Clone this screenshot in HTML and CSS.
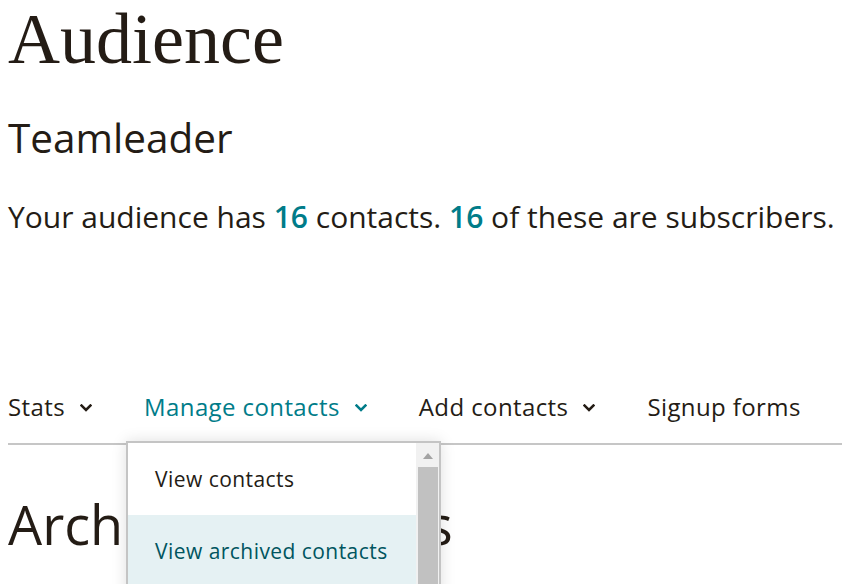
FILE: index.html
```html
<!DOCTYPE html>
<html lang="en">
<head>
<meta charset="utf-8">
<title>Audience</title>
<link rel="stylesheet" href="styles.css">
</head>
<body>
<main class="page">
  <h1 class="page-title">Audience</h1>
  <h2 class="audience-name">Teamleader</h2>
  <p class="summary">Your audience has <span class="count">16</span> contacts. <span class="count">16</span> of these are subscribers.</p>

  <nav class="tabs">
    <div class="tab">
      <span>Stats</span>
      <svg class="chev" viewBox="0 0 12 8" width="12" height="8"><path d="M1.6 1.6 L6 6 L10.4 1.6"/></svg>
    </div>
    <div class="tab tab-open">
      <span>Manage contacts</span>
      <svg class="chev" viewBox="0 0 12 8" width="12" height="8"><path d="M1.6 1.6 L6 6 L10.4 1.6"/></svg>
      <div class="menu">
        <ul class="menu-list">
          <li class="menu-item">View contacts</li>
          <li class="menu-item menu-item-active">View archived contacts</li>
        </ul>
        <div class="scrollbar">
          <div class="scroll-up"></div>
          <div class="scroll-thumb"></div>
        </div>
      </div>
    </div>
    <div class="tab">
      <span>Add contacts</span>
      <svg class="chev" viewBox="0 0 12 8" width="12" height="8"><path d="M1.6 1.6 L6 6 L10.4 1.6"/></svg>
    </div>
    <div class="tab">
      <span>Signup forms</span>
    </div>
  </nav>

  <h2 class="section-title">Archived contacts</h2>
</main>
</body>
</html>
```
FILE: styles.css
```css
html, body {
  margin: 0;
  padding: 0;
  background: #ffffff;
}

.page {
  box-sizing: border-box;
  height: 584px;
  overflow: hidden;
  padding: 3px 0 0 8px;
  color: #241c15;
  font-family: "Open Sans", "Liberation Sans", sans-serif;
}

.page-title {
  margin: 0;
  font-family: "Liberation Serif", serif;
  font-weight: 400;
  font-size: 72px;
  line-height: 72px;
  color: #241c15;
}

.audience-name {
  margin: 39px 0 0;
  font-weight: 400;
  font-size: 40.5px;
  line-height: 48px;
}

.summary {
  margin: 35px 0 0;
  font-size: 30px;
  line-height: 40px;
  white-space: nowrap;
}

.count {
  color: #007c89;
  font-weight: 600;
}

.tabs {
  margin-top: 155px;
  display: flex;
  align-items: center;
  gap: 52px;
  padding-bottom: 21px;
  border-bottom: 2px solid #c6c6c6;
}

.tab {
  position: relative;
  display: flex;
  align-items: center;
  gap: 15px;
  font-size: 24px;
  line-height: 30px;
  font-weight: 500;
  letter-spacing: 0.4px;
  white-space: nowrap;
}

.tab-open {
  color: #007c89;
}

.chev {
  display: block;
  fill: none;
  stroke: currentColor;
  stroke-width: 2.6;
  stroke-linecap: square;
  margin-top: 1px;
}

.menu {
  position: absolute;
  left: -18px;
  top: 49px;
  width: 311px;
  height: 200px;
  display: flex;
  background: #ffffff;
  border: 2px solid #c4c4c4;
  box-shadow: 0 0 14px rgba(0, 0, 0, 0.13);
  z-index: 5;
}

.menu-list {
  list-style: none;
  margin: 0;
  padding: 0;
  flex: 1;
}

.menu-item {
  height: 72px;
  padding-left: 27px;
  font-size: 21px;
  line-height: 72px;
  font-weight: 500;
  letter-spacing: 0.45px;
  color: #241c15;
}

.menu-item-active {
  background: #e5f1f3;
  color: #00555f;
}

.scrollbar {
  width: 23px;
  background: #f1f1f1;
  display: flex;
  flex-direction: column;
  align-items: center;
  padding-top: 10px;
}

.scroll-up {
  width: 0;
  height: 0;
  border-left: 5px solid transparent;
  border-right: 5px solid transparent;
  border-bottom: 6px solid #a3a3a3;
}

.scroll-thumb {
  margin-top: 8px;
  width: 20px;
  flex: 1;
  background: #c1c1c1;
}

.section-title {
  margin: 47px 0 0;
  font-weight: 400;
  font-size: 54px;
  line-height: 64px;
  white-space: nowrap;
}
```
